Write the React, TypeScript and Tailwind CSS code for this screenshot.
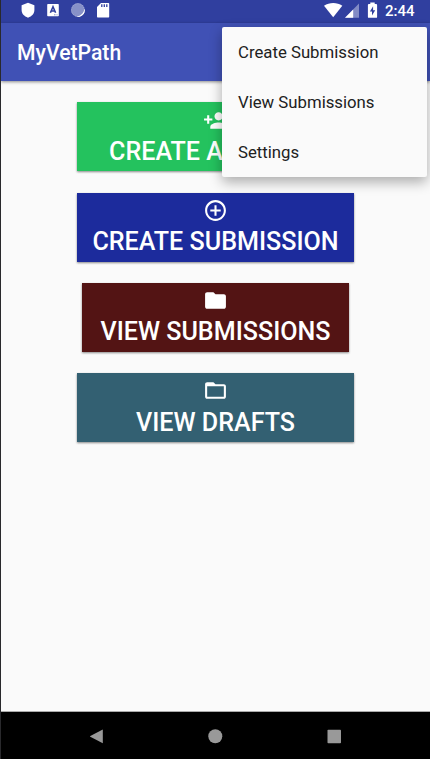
import type { ReactNode } from "react";

const PATHS = {
  personAdd:
    "M15 12c2.21 0 4-1.79 4-4s-1.79-4-4-4-4 1.79-4 4 1.79 4 4 4zm-9-2V7H4v3H1v2h3v3h2v-3h3v-2H6zm9 4c-2.67 0-8 1.34-8 4v2h16v-2c0-2.66-5.33-4-8-4z",
  addCircle:
    "M13 7h-2v4H7v2h4v4h2v-4h4v-2h-4V7zm-1-5C6.48 2 2 6.48 2 12s4.48 10 10 10 10-4.48 10-10S17.52 2 12 2zm0 18c-4.41 0-8-3.59-8-8s3.59-8 8-8 8 3.59 8 8-3.59 8-8 8z",
  folder:
    "M10 4H4c-1.1 0-1.99.9-1.99 2L2 18c0 1.1.9 2 2 2h16c1.1 0 2-.9 2-2V8c0-1.1-.9-2-2-2h-8l-2-2z",
  folderOpen:
    "M20 6h-8l-2-2H4c-1.1 0-1.99.9-1.99 2L2 18c0 1.1.9 2 2 2h16c1.1 0 2-.9 2-2V8c0-1.1-.9-2-2-2zm0 12H4V8h16v10z",
};

function ActionButton({ path, color, className, children }: { path: string; color: string; className: string; children: ReactNode }) {
  return (
    <button
      className={`flex h-[69px] shrink-0 flex-col items-center pt-[5.2px] text-white shadow-[0_1px_2px_rgba(0,0,0,0.45)] ${color} ${className}`}
    >
      <svg viewBox="0 0 24 24" className="h-[25px] w-[25px] shrink-0" fill="currentColor">
        <path d={path} />
      </svg>
      <span className="mt-[4.2px] text-[25.1px] leading-[30px] font-medium whitespace-nowrap">{children}</span>
    </button>
  );
}

function StatusBar() {
  return (
    <div className="flex h-[23px] items-center justify-between bg-[#303f9f] text-white">
      <svg width="110" height="23" viewBox="0 0 110 23" fill="currentColor">
        <path d="M27 2.8 33.4 5.2V10c0 3.7-2.5 6.3-6.4 7.7C23.1 16.3 20.6 13.7 20.6 10V5.2z" />
        <rect x="46.2" y="4" width="11.6" height="12.3" rx="0.8" />
        <path d="M49.4 12.8 52 6.8 54.6 12.8M50.4 11h3.2" fill="none" stroke="#303f9f" strokeWidth="1.6" />
        <path d="M53 14.8h3.5" stroke="#303f9f" strokeWidth="0.6" strokeDasharray="1 .5" />
        <g transform="translate(-0.6 0)">
          <circle cx="77.5" cy="10" r="6.8" fill="#8791c8" />
          <circle cx="77.5" cy="10" r="6.4" fill="none" stroke="#a9b0d9" strokeWidth="0.9" strokeDasharray="1 1" />
          <path d="M84.300 8.500a7 7 0 0 1-8.500 8.400c4 -.6 7.500-3.500 8.500-8.400z" />
        </g>
        <g transform="translate(-1 0)">
          <path d="M101 3h7.200c.6 0 1 .4 1 1v12.600c0 .6-.4 1-1 1H98c-.6 0-1-.4-1-1V7z" />
          <path d="M101.800 4.300v2.800M104.300 4.300v2.800M106.800 4.300v2.800" stroke="#303f9f" strokeWidth="1.3" />
        </g>
      </svg>
      <div className="flex h-[23px] items-center">
        <svg width="61" height="23" viewBox="322 0 61 23" fill="currentColor">
          <path d="M324 5.7C329.500 2.200 337 2.200 342.300 5.700L333.200 17.200z" />
          <path d="M359 3.500V17.800H345z" opacity=".4" />
          <path d="M353.200 9.400V17.800H345z" />
          <path d="M370.300 2.500h4.400V4h1.500c.5 0 .9.4.9.900v12c0 .5-.4.9-.9.9h-7.400c-.5 0-.9-.4-.9-.9V4.900c0-.5.4-.9.9-.9h1.500z" />
          <path d="M373.100 6.300v3.900h2.100l-3.200 5.300v-3.900h-2.100z" fill="#303f9f" />
        </svg>
        <span className="w-[47px] pb-[2px] pl-[2px] text-[15px] leading-[20px] font-medium">2:44</span>
      </div>
    </div>
  );
}

export default function App() {
  return (
    <div className="relative flex h-[759px] w-[430px] flex-col overflow-hidden border-l border-[#29292c] bg-[#fafafa] font-['Roboto',sans-serif]">
      <StatusBar />
      <header className="z-10 flex h-[58px] shrink-0 items-center bg-[#4051b5] pt-px pl-4 shadow-[0_1px_3px_rgba(0,0,0,0.45)]">
        <h1 className="text-[21.2px] leading-6 font-medium text-white">MyVetPath</h1>
      </header>

      <main className="flex flex-1 flex-col items-center gap-[21.3px] pt-[21.4px]">
        <ActionButton path={PATHS.personAdd} color="bg-[#24c25e]" className="w-[277px]">CREATE ACCOUNT</ActionButton>
        <ActionButton path={PATHS.addCircle} color="bg-[#1c2b9c]" className="w-[277px]">CREATE SUBMISSION</ActionButton>
        <ActionButton path={PATHS.folder} color="bg-[#531414]" className="w-[267.4px]">VIEW SUBMISSIONS</ActionButton>
        <ActionButton path={PATHS.folderOpen} color="bg-[#336072]" className="w-[277px]">VIEW DRAFTS</ActionButton>
      </main>

      <nav className="flex h-[48px] shrink-0 items-center border-t border-[#aaa] bg-black">
        <svg width="429" height="47" viewBox="1 712 429 47" fill="#999">
          <path d="M102.800 729.500v13.800L90.300 736.800q-.6-.4 0-.8z" />
          <circle cx="215.300" cy="736.200" r="7" />
          <rect x="327.500" y="729.800" width="13.500" height="13.500" rx=".8" />
        </svg>
      </nav>

      <div className="absolute top-[27px] left-[220.5px] z-20 h-[150px] w-[205.5px] rounded-[2px] bg-[#fafafa] pt-px text-[16.75px] text-[#212121] shadow-[0_5px_13px_rgba(0,0,0,0.32)]">
        <div className="flex h-[50px] items-center pl-[16.5px]">Create Submission</div>
        <div className="flex h-[50px] items-center pl-[16.5px]">View Submissions</div>
        <div className="flex h-[49px] items-center pl-[16.5px]">Settings</div>
      </div>
    </div>
  );
}
